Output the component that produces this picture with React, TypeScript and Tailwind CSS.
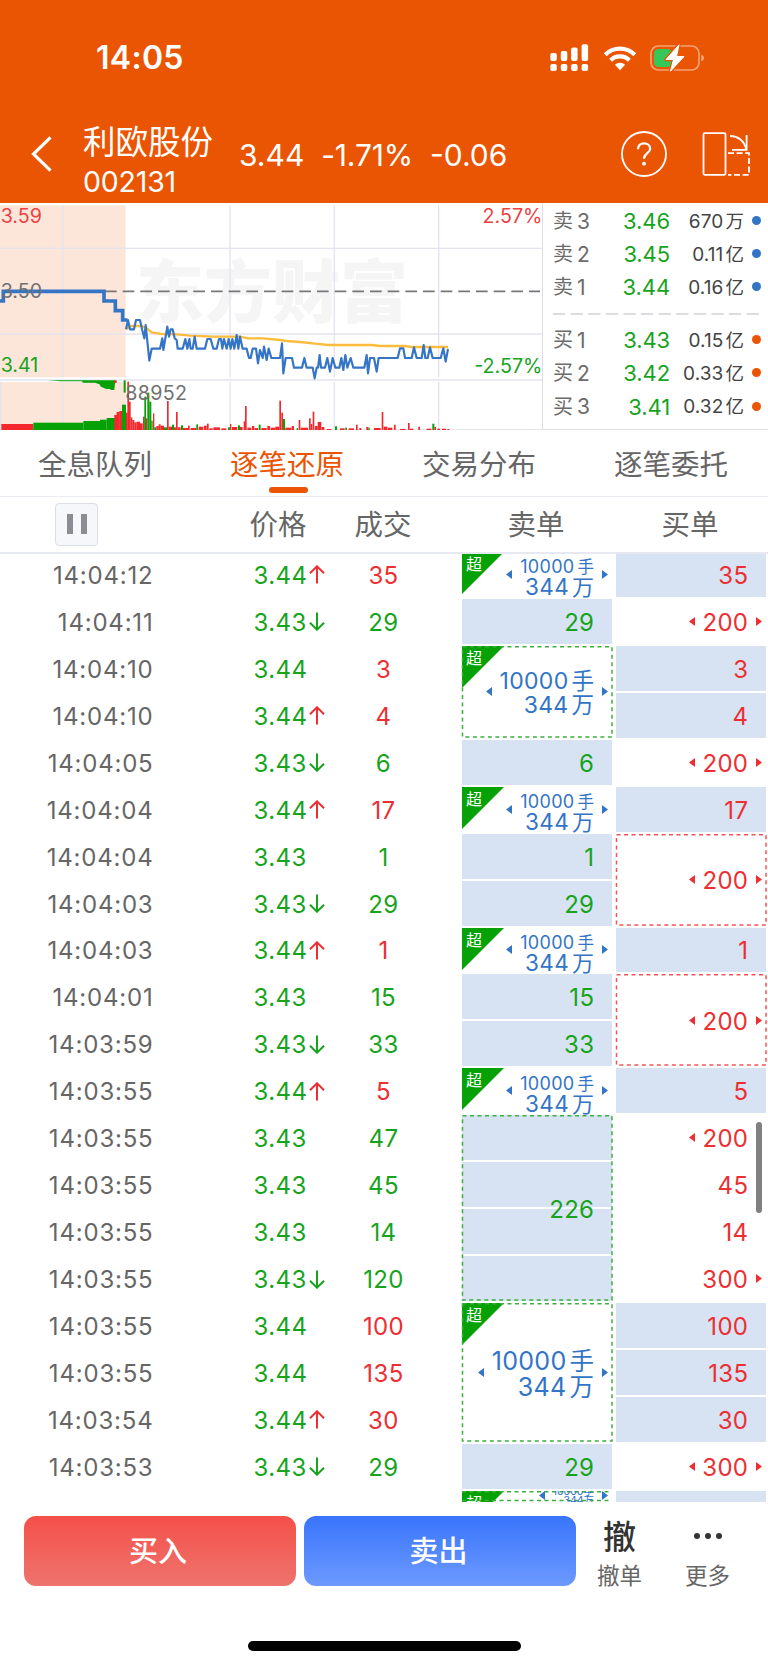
import React from 'react';

const GREEN = '#17a31c';
const RED = '#ec2f33';
const BLUE = '#3274c6';

type Span = 1 | 2 | 3 | 4;

interface Trade {
  time: string;
  price: string;
  dir?: 'up' | 'down';
  vol: string;
  side: 'buy' | 'sell';
}

interface Block {
  span: Span;
  kind: 'fill' | 'open' | 'super' | 'cut';
  value?: string;
  left?: boolean;
  right?: boolean;
}

const trades: Trade[] = [
  { time: '14:04:12', price: '3.44', dir: 'up', vol: '35', side: 'buy' },
  { time: '14:04:11', price: '3.43', dir: 'down', vol: '29', side: 'sell' },
  { time: '14:04:10', price: '3.44', vol: '3', side: 'buy' },
  { time: '14:04:10', price: '3.44', dir: 'up', vol: '4', side: 'buy' },
  { time: '14:04:05', price: '3.43', dir: 'down', vol: '6', side: 'sell' },
  { time: '14:04:04', price: '3.44', dir: 'up', vol: '17', side: 'buy' },
  { time: '14:04:04', price: '3.43', vol: '1', side: 'sell' },
  { time: '14:04:03', price: '3.43', dir: 'down', vol: '29', side: 'sell' },
  { time: '14:04:03', price: '3.44', dir: 'up', vol: '1', side: 'buy' },
  { time: '14:04:01', price: '3.43', vol: '15', side: 'sell' },
  { time: '14:03:59', price: '3.43', dir: 'down', vol: '33', side: 'sell' },
  { time: '14:03:55', price: '3.44', dir: 'up', vol: '5', side: 'buy' },
  { time: '14:03:55', price: '3.43', vol: '47', side: 'sell' },
  { time: '14:03:55', price: '3.43', vol: '45', side: 'sell' },
  { time: '14:03:55', price: '3.43', vol: '14', side: 'sell' },
  { time: '14:03:55', price: '3.43', dir: 'down', vol: '120', side: 'sell' },
  { time: '14:03:55', price: '3.44', vol: '100', side: 'buy' },
  { time: '14:03:55', price: '3.44', vol: '135', side: 'buy' },
  { time: '14:03:54', price: '3.44', dir: 'up', vol: '30', side: 'buy' },
  { time: '14:03:53', price: '3.43', dir: 'down', vol: '29', side: 'sell' },
];

const sells: Block[] = [
  { span: 1, kind: 'super' },
  { span: 1, kind: 'fill', value: '29' },
  { span: 2, kind: 'super' },
  { span: 1, kind: 'fill', value: '6' },
  { span: 1, kind: 'super' },
  { span: 1, kind: 'fill', value: '1' },
  { span: 1, kind: 'fill', value: '29' },
  { span: 1, kind: 'super' },
  { span: 1, kind: 'fill', value: '15' },
  { span: 1, kind: 'fill', value: '33' },
  { span: 1, kind: 'super' },
  { span: 4, kind: 'fill', value: '226' },
  { span: 3, kind: 'super' },
  { span: 1, kind: 'fill', value: '29' },
  { span: 1, kind: 'cut' },
];

const buys: Block[] = [
  { span: 1, kind: 'fill', value: '35' },
  { span: 1, kind: 'open', value: '200', left: true, right: true },
  { span: 1, kind: 'fill', value: '3' },
  { span: 1, kind: 'fill', value: '4' },
  { span: 1, kind: 'open', value: '200', left: true, right: true },
  { span: 1, kind: 'fill', value: '17' },
  { span: 2, kind: 'open', value: '200', left: true, right: true },
  { span: 1, kind: 'fill', value: '1' },
  { span: 2, kind: 'open', value: '200', left: true, right: true },
  { span: 1, kind: 'fill', value: '5' },
  { span: 1, kind: 'open', value: '200', left: true },
  { span: 1, kind: 'open', value: '45' },
  { span: 1, kind: 'open', value: '14' },
  { span: 1, kind: 'open', value: '300', right: true },
  { span: 1, kind: 'fill', value: '100' },
  { span: 1, kind: 'fill', value: '135' },
  { span: 1, kind: 'fill', value: '30' },
  { span: 1, kind: 'open', value: '300', left: true, right: true },
  { span: 1, kind: 'fill' },
];

const spanClass: Record<Span, string> = {
  1: 'row-span-1',
  2: 'row-span-2',
  3: 'row-span-3',
  4: 'row-span-4',
};

function Tri({ side, color }: { side: 'left' | 'right'; color: string }) {
  return (
    <svg viewBox="0 0 6 9" className="h-[9px] w-[6px] shrink-0">
      <path d={side === 'left' ? 'M6 0V9L0 4.5Z' : 'M0 0V9L6 4.5Z'} fill={color} />
    </svg>
  );
}

function Dashed({ color }: { color: string }) {
  return (
    <svg className="absolute top-0 left-0 h-[calc(100%-1.5px)] w-full overflow-visible">
      <rect x="0.5" y="0.7" width="149.5" height="100%" fill="none" stroke={color} strokeWidth="1.5" strokeDasharray="4 3.5" />
    </svg>
  );
}

function SuperTag() {
  return (
    <div className="absolute top-0 left-0 h-[42px] w-[42px]">
      <svg viewBox="0 0 42 42" className="absolute inset-0 h-full w-full">
        <path d="M0 0H42L0 42Z" fill="#06a106" />
      </svg>
      <span className="absolute top-[3px] left-[4px] text-[16px] leading-[18px] text-white">超</span>
    </div>
  );
}

function SuperText({ span }: { span: Span }) {
  if (span === 1) {
    return (
      <div className="flex flex-col items-end pt-[6px] text-right">
        <span className="flex items-center gap-[3px] text-[18px] leading-[20px] tracking-[0.3px]">10000<i className="-mr-[0.3px] text-[16.5px] not-italic">手</i></span>
        <span className="flex items-center gap-[3px] text-[22.5px] leading-[20px] tracking-[0.3px]">344<i className="-mr-[0.3px] text-[22px] not-italic">万</i></span>
      </div>
    );
  }
  if (span === 2) {
    return (
      <div className="flex flex-col items-end pt-[3px] text-right">
        <span className="flex items-center gap-[3px] text-[23px] leading-[24px] tracking-[0.3px]">10000<i className="-mr-[0.3px] text-[22.5px] not-italic">手</i></span>
        <span className="flex items-center gap-[3px] text-[23px] leading-[24px] tracking-[0.3px]">344<i className="-mr-[0.3px] text-[22.5px] not-italic">万</i></span>
      </div>
    );
  }
  return (
    <div className="flex flex-col items-end pt-[4px] text-right">
      <span className="flex items-center gap-[3px] text-[25px] leading-[26px] tracking-[0.3px]">10000<i className="-mr-[0.3px] text-[24.5px] not-italic">手</i></span>
      <span className="flex items-center gap-[3px] text-[25px] leading-[26px] tracking-[0.3px]">344<i className="-mr-[0.3px] text-[24.5px] not-italic">万</i></span>
    </div>
  );
}

function Cell({ block, side }: { block: Block; side: 'buy' | 'sell' }) {
  const color = side === 'buy' ? RED : GREEN;
  const { span, kind } = block;
  const dashed = span > 1;
  if (kind === 'cut') {
    return (
      <div className="relative h-[11px] overflow-hidden">
        <SuperTag />
        <svg className="absolute inset-0 h-full w-full">
          <path d="M0 0.8H150M0 9.5H150" stroke="#3fae40" strokeWidth="1.5" strokeDasharray="4 3.5" />
        </svg>
        <div className="relative -mt-[4px] flex items-center justify-end gap-[8px] pr-[4px] text-[#3274c6]">
          <Tri side="left" color={BLUE} />
          <div className="flex flex-col items-end text-[10.5px] leading-[9px]">
            <span>10000手</span>
            <span>344万</span>
          </div>
          <Tri side="right" color={BLUE} />
        </div>
      </div>
    );
  }
  return (
    <div className={`${spanClass[span]} relative mb-[2px] flex items-center justify-end pr-[4px] ${kind === 'fill' && span === 1 ? 'bg-[#d7e3f3]' : ''}`}>
      {kind === 'fill' && span > 1 && (
        <div className="absolute inset-0 flex flex-col gap-[2px]">
          {Array.from({ length: span }, (_, i) => (
            <div key={i} className="flex-1 bg-[#d7e3f3]" />
          ))}
        </div>
      )}
      {kind === 'super' && <SuperTag />}
      {dashed && <Dashed color={side === 'buy' ? '#ef5558' : '#3fae40'} />}
      {kind === 'super' ? (
        <div className="relative flex items-center gap-[8px] text-[#3274c6]">
          <Tri side="left" color={BLUE} />
          <SuperText span={span} />
          <Tri side="right" color={BLUE} />
        </div>
      ) : (
        <div className="relative flex items-center gap-[8px]">
          {block.left && <Tri side="left" color={color} />}
          <span className={`-mr-[0.3px] -ml-[1px] pt-[3px] text-[24px] leading-none tracking-[0.3px] ${side === 'buy' ? 'text-[#ec2f33]' : 'text-[#17a31c]'}`}>{block.value}</span>
          {block.right ? <Tri side="right" color={color} /> : <span className="w-[6px]" />}
        </div>
      )}
    </div>
  );
}

function Arrow({ dir }: { dir: 'up' | 'down' }) {
  return (
    <svg viewBox="0 0 16 19" className="h-[19px] w-[16px]" fill="none" stroke={dir === 'up' ? RED : GREEN} strokeWidth="2">
      <path d={dir === 'up' ? 'M8 18.5V1.5M1 8.3L8 1.3L15 8.3' : 'M8 0.5V17.5M1 10.7L8 17.7L15 10.7'} />
    </svg>
  );
}

function StatusBar() {
  return (
    <div className="flex h-[108px] items-center justify-between pt-[7px] pr-[64px] pl-[96px]">
      <span className="pt-[1px] text-[32px] leading-none font-semibold tracking-[0.3px]">14:05</span>
      <div className="flex items-center">
        <svg viewBox="0 0 39 28" className="h-[28px] w-[39px]" fill="#fff">
          <rect x="0.3" y="9" width="6.5" height="8" rx="2" />
          <rect x="10.8" y="7" width="6.5" height="10" rx="2" />
          <rect x="21.1" y="3.6" width="6.5" height="13.4" rx="2" />
          <rect x="31.6" y="0.3" width="6.5" height="16.7" rx="2" />
          <rect x="0.3" y="20" width="6.5" height="7" rx="2" />
          <rect x="10.8" y="20" width="6.5" height="7" rx="2" />
          <rect x="21.1" y="20" width="6.5" height="7" rx="2" />
          <rect x="31.6" y="20" width="6.5" height="7" rx="2" />
        </svg>
        <svg viewBox="0 0 34 26" className="ml-[14px] h-[26px] w-[34px]" fill="none" stroke="#fff" strokeWidth="4.2">
          <path d="M2.2 9.7A21 21 0 0 1 31.8 9.7" />
          <path d="M7.6 15.3A13.4 13.4 0 0 1 26.4 15.3" />
          <path d="M17 25.2L11.9 19.8A7.4 7.4 0 0 1 22.1 19.8Z" fill="#fff" stroke="none" />
        </svg>
        <svg viewBox="0 0 54 28" className="ml-[13px] h-[28px] w-[54px]">
          <rect x="1" y="2" width="48" height="24" rx="7.5" fill="none" stroke="#fff" strokeOpacity="0.45" strokeWidth="1.7" />
          <path d="M51.3 10.5Q54 11.5 54 14T51.3 17.5Z" fill="#fff" fillOpacity="0.5" />
          <rect x="4" y="5" width="18" height="18" rx="4.5" fill="#36c759" />
          <path d="M29 0.5L16 15.5H23.5L20.5 27.5L34 12.5H26.5Z" fill="#fff" stroke="#ea5504" strokeWidth="3.4" strokeLinejoin="round" />
          <path d="M29 0.8L16 15.5H23.5L20.5 27.2L34 12.5H26.5Z" fill="#fff" stroke="#fff" strokeWidth="1" strokeLinejoin="round" />
        </svg>
      </div>
    </div>
  );
}

function TitleBar() {
  return (
    <div className="flex h-[95px] items-center pb-[3px] pl-[31px]">
      <svg viewBox="0 0 22 36" className="h-[36px] w-[22px]" fill="none" stroke="#fff" strokeWidth="3.2">
        <path d="M19.5 1.3L2.5 18L19.5 34.7" />
      </svg>
      <div className="ml-[30px] flex w-[130px] flex-col pt-[14px]">
        <span className="text-[32.5px] leading-[40px]">利欧股份</span>
        <span className="pt-[2px] text-[28.5px] leading-[34px] tracking-[-0.2px]">002131</span>
      </div>
      <div className="ml-[26px] flex w-[382px] gap-[17px] pt-[1px] text-[30px] leading-none">
        <span>3.44</span>
        <span className="tracking-[-0.2px]">-1.71%</span>
        <span>-0.06</span>
      </div>
      <svg viewBox="0 0 46 46" className="h-[46px] w-[46px]" fill="none" stroke="#fff" strokeWidth="1.8">
        <circle cx="23" cy="23" r="22" />
        <path d="M17 18.2C17 14.5 19.5 12.3 23 12.3S29.2 14.6 29.2 17.8C29.2 22.5 23 22 23 27.8" strokeWidth="2.2" />
        <circle cx="23" cy="32.7" r="1.9" fill="#fff" stroke="none" />
      </svg>
      <svg viewBox="0 0 48 44" className="ml-[35px] h-[44px] w-[48px]" fill="none" stroke="#fff" strokeWidth="1.8">
        <rect x="1.5" y="1.2" width="22" height="41.6" rx="1.2" />
        <path d="M28 4C36 4 42.5 9 44.2 17.5M44.6 3V17.8H30" />
        <path d="M26 21.2H47V42.8H26" strokeDasharray="6 2.6" />
      </svg>
    </div>
  );
}

const PRE = 'M0 303H10V274H312V303H346V332H368V360H382';
const PRICE =
  'M378 388L384 360L390 388H402L408 360H420L426 388L433 415L437 375L448 482L455 446H480L487 415L490 450L502 380L507 410L512 388H518L524 415L530 420L533 446H548L556 417L562 446L568 417L572 446H578L584 410L590 446H615L622 417H632L640 446H650L657 417H663L667 446L672 417L680 446L686 417L692 446L697 417L703 446L710 405L715 446L720 410L728 446H740L747 474H752L758 446H768L774 490L780 450L788 474L792 440L800 480L806 446L814 474H840' +
  'L846 430L850 520L857 474H876L882 503H906L913 474L920 503H938L944 535L950 503H954L959 465L963 503H975L982 474L990 515L998 474L1006 503H1018L1024 474L1030 510L1036 465L1042 503L1052 474L1060 503H1093L1100 465L1104 520L1110 474H1122L1130 515L1136 474H1193L1200 445H1210L1215 474H1235L1242 442L1250 474H1265L1271 435L1276 474L1283 474L1290 442L1298 474H1322L1330 445L1337 485L1344 447';
const AVG =
  'M378 388L390 378H425L440 385L455 397L485 402L530 403L570 407L640 410H720L745 415H790L840 420L860 423L900 426L945 431L985 435H1115L1140 438H1215L1235 441H1344';

// [x, width, top, tone]
const bars: [number, number, number, 'r' | 'g'][] = [
  [4, 96, 672, 'r'], [100, 150, 668, 'g'], [250, 60, 663, 'g'], [300, 20, 659, 'g'], [320, 25, 654, 'g'],
  [343, 8, 645, 'r'], [350, 9, 636, 'r'], [358, 10, 633, 'r'], [366, 12, 614, 'g'], [378, 5, 638, 'r'],
  [382, 5, 545, 'r'], [387, 5, 605, 'r'], [392, 5, 652, 'r'], [397, 6, 660, 'r'], [403, 7, 667, 'r'],
  [410, 10, 665, 'r'], [420, 8, 670, 'r'], [429, 5, 650, 'r'], [433, 5, 590, 'g'], [438, 4, 655, 'r'],
  [442, 6, 578, 'g'], [448, 6, 605, 'g'], [454, 4, 662, 'g'], [459, 4, 640, 'r'], [463, 6, 682, 'g'],
  [469, 7, 678, 'r'], [476, 6, 673, 'r'], [482, 10, 677, 'r'], [492, 9, 682, 'g'], [501, 5, 603, 'r'],
  [506, 10, 680, 'r'], [516, 6, 674, 'g'], [522, 6, 682, 'r'], [528, 5, 636, 'r'], [533, 9, 682, 'r'],
  [543, 6, 676, 'g'], [549, 15, 684, 'r'], [564, 5, 677, 'r'], [572, 17, 684, 'r'], [589, 5, 673, 'g'],
  [596, 14, 680, 'r'], [612, 8, 677, 'r'], [621, 5, 671, 'r'], [628, 10, 685, 'r'], [640, 20, 682, 'r'],
  [664, 15, 685, 'r'], [684, 8, 682, 'g'], [690, 4, 672, 'r'], [696, 16, 681, 'r'], [714, 6, 676, 'g'],
  [720, 8, 681, 'r'], [731, 4, 664, 'r'], [735, 5, 618, 'r'], [742, 12, 683, 'r'], [756, 7, 678, 'r'],
  [764, 10, 684, 'r'], [776, 6, 674, 'g'], [784, 16, 684, 'r'], [802, 8, 678, 'r'], [812, 14, 683, 'r'],
  [826, 12, 680, 'r'], [838, 5, 602, 'r'], [844, 5, 638, 'r'], [849, 6, 657, 'g'], [856, 18, 683, 'r'],
  [875, 7, 678, 'r'], [890, 4, 684, 'g'], [896, 5, 660, 'r'], [902, 22, 683, 'r'], [927, 5, 655, 'r'],
  [932, 5, 672, 'r'], [938, 5, 635, 'r'], [945, 8, 678, 'r'], [953, 11, 666, 'r'], [965, 8, 681, 'r'],
  [980, 14, 687, 'r'], [1005, 6, 679, 'g'], [1020, 14, 685, 'r'], [1036, 5, 683, 'g'], [1046, 16, 685, 'r'],
  [1068, 5, 674, 'r'], [1078, 6, 684, 'r'], [1099, 6, 681, 'r'], [1105, 4, 683, 'g'], [1122, 20, 684, 'r'],
  [1145, 5, 636, 'r'], [1151, 11, 680, 'r'], [1163, 14, 683, 'r'], [1182, 5, 674, 'r'], [1200, 16, 687, 'r'],
  [1224, 5, 669, 'r'], [1230, 10, 686, 'r'], [1255, 5, 680, 'r'], [1280, 14, 686, 'r'], [1297, 6, 671, 'g'],
  [1303, 5, 681, 'r'], [1312, 8, 686, 'r'], [1326, 12, 686, 'r'], [1342, 6, 687, 'r'],
];

function Chart() {
  return (
    <svg viewBox="0 9 1629 681" className="h-[227px] w-[543px] shrink-0" fontFamily="Inter">
      <rect x="0" y="16" width="377" height="516" fill="#fce6da" />
      <rect x="0" y="546" width="377" height="144" fill="#fce6da" />
      <text x="408" y="352" fontFamily="Noto Sans CJK SC" fontWeight="900" fontSize="204" fill="#f5f5f6">东方财富</text>
      <g stroke="#e3e4ef" strokeWidth="4">
        <path d="M0 145H1629M0 402H1629M0 540H1629" />
        <path d="M188 16V532M188 546V690M690 16V532M690 546V690M1003 16V532M1003 546V690M1316 16V532M1316 546V690" />
        <path d="M2 546V690M0 689H1629" />
      </g>
      <path d="M1628 9V690" stroke="#dcdde6" strokeWidth="4" />
      <path d="M315 274H1620" stroke="#777" strokeWidth="5" strokeDasharray="35 18" />
      <g>
        {bars.map(([x, w, top, tone], i) => (
          <rect key={i} x={x} y={top} width={w} height={690 - top} fill={tone === 'r' ? '#f2282d' : '#06a106'} />
        ))}
        <path d="M145 541H346L343 570H333L330 567H318L303 560L298 553L285 548H250L245 544H180Z" fill="#06a106" />
        <path d="M343 541H350V549H343Z" fill="#f2282d" />
        <path d="M371 541H377V578H371Z" fill="#06a106" />
      </g>
      <path d={AVG} fill="none" stroke="#fbbc3c" strokeWidth="7" />
      <path d={PRE} fill="none" stroke="#3575c6" strokeWidth="11" />
      <path d={PRICE} fill="none" stroke="#3575c6" strokeWidth="6.5" strokeLinejoin="round" />
      <g fontSize="59">
        <text x="2" y="68" fill="#ef3f42">3.59</text>
        <text x="2" y="293" fill="#707070">3.50</text>
        <text x="2" y="517" fill={GREEN}>3.41</text>
        <text x="1627" y="68" textAnchor="end" fill="#ef3f42">2.57%</text>
        <text x="1627" y="518" textAnchor="end" fill={GREEN}>-2.57%</text>
        <text x="376" y="601" fill="#707070" letterSpacing="1">88952</text>
      </g>
    </svg>
  );
}

const asks: [string, string, string][] = [
  ['卖3', '3.46', '670万'],
  ['卖2', '3.45', '0.11亿'],
  ['卖1', '3.44', '0.16亿'],
];
const bids: [string, string, string][] = [
  ['买1', '3.43', '0.15亿'],
  ['买2', '3.42', '0.33亿'],
  ['买3', '3.41', '0.32亿'],
];

function Level({ row, dot }: { row: [string, string, string]; dot: string }) {
  const [label, price, amount] = row;
  return (
    <div className="flex h-[33.2px] items-center pr-[8px] pl-[10px] leading-none">
      <span className="flex w-[46px] items-center gap-[4px] pt-[1px] text-[20px] text-[#6b6b6b]">
        {label[0]}
        <i className="text-[21px] not-italic">{label[1]}</i>
      </span>
      <span className="w-[71px] pt-[1px] text-right text-[22px] tracking-[-0.1px] text-[#17a31c]">{price}</span>
      <span className="flex w-[74px] items-center justify-end gap-[2px] pt-[1px] text-[19px] tracking-[0.1px] text-[#444]">
        {amount.slice(0, -1)}
        <i className="text-[18.5px] not-italic">{amount.slice(-1)}</i>
      </span>
      <span className={`ml-[7.5px] h-[9px] w-[9px] rounded-full ${dot}`} />
    </div>
  );
}

export default function App() {
  return (
    <div className="flex h-[1667px] w-[768px] flex-col overflow-hidden bg-white font-[Inter,'Noto_Sans_CJK_SC',sans-serif] text-[#666]">
      <header className="h-[203px] shrink-0 bg-[#ea5504] text-white">
        <StatusBar />
        <TitleBar />
      </header>

      <section className="flex h-[227px] shrink-0">
        <Chart />
        <div className="flex flex-1 flex-col border-b border-[#dcdde6] pt-[1px]">
          {asks.map((r) => <Level key={r[0]} row={r} dot="bg-[#3274c6]" />)}
          <svg className="mt-[9px] ml-[10px] h-[2px] w-[206px]">
            <path d="M0 1H206" stroke="#dcdde4" strokeWidth="2" strokeDasharray="12.3 5.3" />
          </svg>
          <div className="h-[8.6px]" />
          {bids.map((r) => <Level key={r[0]} row={r} dot="bg-[#ea5504]" />)}
        </div>
      </section>

      <nav className="grid h-[67px] shrink-0 grid-cols-4 border-b border-[#ebecf3] text-center text-[28.5px] leading-[40px]">
        {['全息队列', '逐笔还原', '交易分布', '逐笔委托'].map((t, i) => (
          <div key={t} className={`flex flex-col items-center pt-[14.5px] ${i === 1 ? 'text-[#ea5504]' : ''}`}>
            <span className="-ml-[2px]">{t}</span>
            {i === 1 && <span className="mt-[2.5px] h-[6px] w-[39px] rounded-full bg-[#ea5504]" />}
          </div>
        ))}
      </nav>

      <div className="flex h-[55px] shrink-0 items-center pb-[1px] pl-[55px] text-[28.5px] leading-none">
        <div className="flex h-[43px] w-[43px] items-center justify-center gap-[8px] rounded-[4px] border border-[#dcdfe6] bg-[#f5f7fb]">
          <span className="h-[20px] w-[6px] bg-[#8c8c94]" />
          <span className="h-[20px] w-[6px] bg-[#8c8c94]" />
        </div>
        <span className="ml-[130px] w-[100px] pt-[3px] text-center">价格</span>
        <span className="ml-[5px] w-[100px] pt-[3px] text-center">成交</span>
        <span className="ml-[28px] w-[150px] pt-[3px] text-center">卖单</span>
        <span className="ml-[4px] w-[150px] pt-[3px] text-center">买单</span>
      </div>

      <main className="relative flex h-[950px] shrink-0 overflow-hidden">
        <div className="w-[462px] shrink-0">
          {trades.map((t, i) => (
            <div key={i} className="flex h-[46.95px] items-center text-[24px] leading-none tracking-[0.4px]">
              <span className="w-[153.5px] pt-[1px] text-right tracking-[0.8px]">{t.time}</span>
              <span className={`ml-[100px] w-[55.5px] pt-[1px] ${'text-[#17a31c]'}`}>{t.price}</span>
              <span className="w-[24px] pb-[1px]">{t.dir && <Arrow dir={t.dir} />}</span>
              <span className={`w-[101px] pt-[1px] text-center ${t.side === 'buy' ? 'text-[#ec2f33]' : 'text-[#17a31c]'}`}>{t.vol}</span>
            </div>
          ))}
        </div>
        <div className="grid w-[150px] shrink-0 grid-cols-1 auto-rows-[46.95px]">
          {sells.map((b, i) => <Cell key={i} block={b} side="sell" />)}
        </div>
        <div className="ml-[4px] grid w-[150px] shrink-0 grid-cols-1 auto-rows-[46.95px]">
          {buys.map((b, i) => <Cell key={i} block={b} side="buy" />)}
        </div>
        <div className="absolute inset-x-0 top-0 h-[1.5px] bg-[#e6e9f2]" />
        <div className="absolute top-[570px] right-[6px] h-[91px] w-[6px] rounded-full bg-[#808080]" />
      </main>

      <footer className="flex h-[165px] shrink-0 flex-col items-center pt-[14px]">
        <div className="flex h-[70px] w-full items-center pl-[23.5px] text-[29px] font-medium text-white">
          <button className="h-full w-[272px] rounded-[12px] bg-linear-to-b from-[#f54f4a] to-[#ee726d] pt-[2px] pr-[3px]">买入</button>
          <button className="ml-[8px] h-full w-[272px] rounded-[12px] bg-linear-to-b from-[#3874fb] to-[#6d99ff] pt-[2px] pr-[2px]">卖出</button>
          <div className="ml-[9px] flex w-[70px] flex-col items-center pt-[5px] font-normal">
            <span className="text-[33px] leading-[40px] font-medium text-[#333]">撤</span>
            <span className="mt-[4px] text-[22.5px] leading-[30px] text-[#666]">撤单</span>
          </div>
          <div className="ml-[18px] flex w-[70px] flex-col items-center pt-[5px] font-normal">
            <div className="flex h-[40px] items-center gap-[5px] pb-[1px]">
              <span className="h-[6px] w-[6px] rounded-full bg-[#333]" />
              <span className="h-[6px] w-[6px] rounded-full bg-[#333]" />
              <span className="h-[6px] w-[6px] rounded-full bg-[#333]" />
            </div>
            <span className="mt-[4px] text-[22.5px] leading-[30px] text-[#666]">更多</span>
          </div>
        </div>
        <div className="mt-[55px] h-[10px] w-[273px] rounded-full bg-black" />
      </footer>
    </div>
  );
}
